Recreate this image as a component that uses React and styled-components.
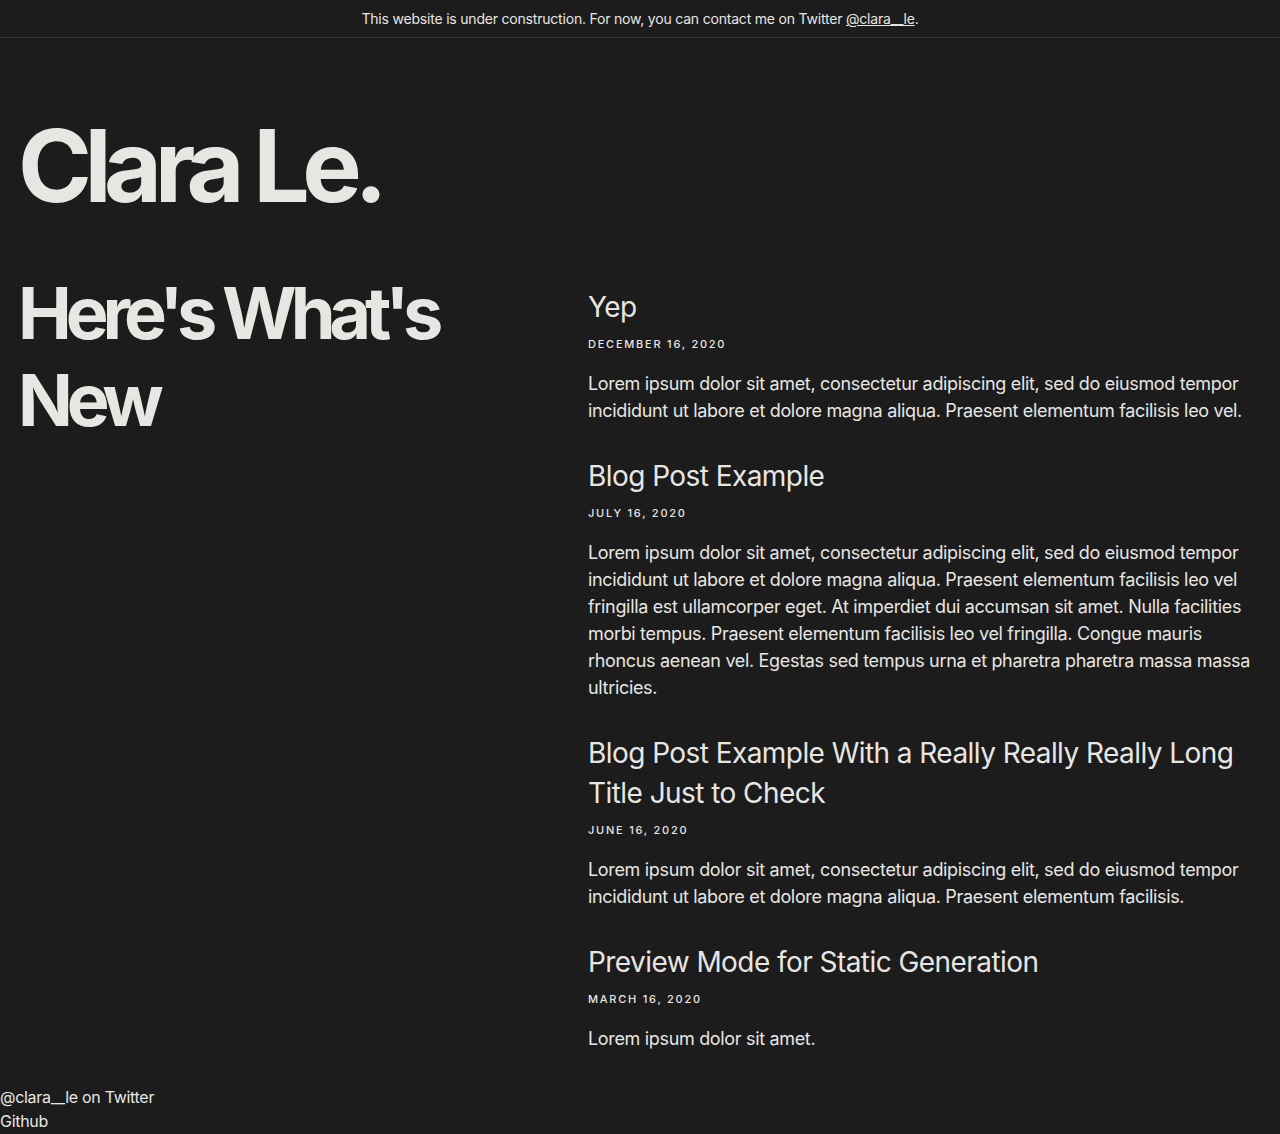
import React from 'react';
import styled, { createGlobalStyle } from 'styled-components';

const GlobalStyle = createGlobalStyle`
  html, body {
    margin: 0;
    padding: 0;
    background: #1b1c1b;
    color: #e8e6e3;
    font-family: Inter, "Noto Sans", sans-serif;
  }
  * { box-sizing: border-box; }
`;

const Banner = styled.div`
  height: 38px;
  border-bottom: 1px solid #363836;
  display: flex;
  align-items: center;
  justify-content: center;
  font-size: 14px;
  letter-spacing: -0.2px;
  color: #e8e6e3;
`;

const BannerLink = styled.a`
  color: inherit;
  text-decoration: underline;
`;

const Main = styled.main`
  padding: 0 20px;
`;

const SiteTitle = styled.h1`
  margin: 0 0 0 -2px;
  padding-top: 68px;
  font-size: 100px;
  line-height: 120px;
  font-weight: 700;
  letter-spacing: -0.075em;
`;

const Columns = styled.div`
  display: grid;
  grid-template-columns: 538px 1fr;
  column-gap: 30px;
  margin-top: 43px;
`;

const SectionTitle = styled.h2`
  margin: 0 0 0 -2px;
  font-size: 72px;
  line-height: 87px;
  font-weight: 700;
  letter-spacing: -0.085em;
`;

const PostList = styled.div`
  display: flex;
  flex-direction: column;
  gap: 32px;
  padding-top: 18px;
`;

const Post = styled.article``;

const PostTitle = styled.h3`
  margin: 0;
  font-size: 28px;
  line-height: 40px;
  font-weight: 400;
  letter-spacing: -0.02em;
`;

const PostDate = styled.div`
  margin-top: 9px;
  font-size: 11px;
  line-height: 16px;
  font-weight: 500;
  letter-spacing: 0.16em;
  text-transform: uppercase;
`;

const PostBody = styled.p`
  margin: 18px 0 0;
  font-size: 18px;
  line-height: 27px;
  letter-spacing: -0.33px;
`;

const Footer = styled.footer`
  margin-top: 33px;
  font-size: 16px;
  line-height: 24px;
  letter-spacing: -0.3px;
`;

const posts = [
  {
    title: 'Yep',
    date: 'December 16, 2020',
    body: 'Lorem ipsum dolor sit amet, consectetur adipiscing elit, sed do eiusmod tempor incididunt ut labore et dolore magna aliqua. Praesent elementum facilisis leo vel.',
  },
  {
    title: 'Blog Post Example',
    date: 'July 16, 2020',
    body: 'Lorem ipsum dolor sit amet, consectetur adipiscing elit, sed do eiusmod tempor incididunt ut labore et dolore magna aliqua. Praesent elementum facilisis leo vel fringilla est ullamcorper eget. At imperdiet dui accumsan sit amet. Nulla facilities morbi tempus. Praesent elementum facilisis leo vel fringilla. Congue mauris rhoncus aenean vel. Egestas sed tempus urna et pharetra pharetra massa massa ultricies.',
  },
  {
    title: 'Blog Post Example With a Really Really Really Long Title Just to Check',
    date: 'June 16, 2020',
    body: 'Lorem ipsum dolor sit amet, consectetur adipiscing elit, sed do eiusmod tempor incididunt ut labore et dolore magna aliqua. Praesent elementum facilisis.',
  },
  {
    title: 'Preview Mode for Static Generation',
    date: 'March 16, 2020',
    body: 'Lorem ipsum dolor sit amet.',
  },
];

export default function App() {
  return (
    <>
      <GlobalStyle />
      <Banner>
        <span>
          This website is under construction. For now, you can contact me on Twitter{' '}
          <BannerLink href="#">@clara__le</BannerLink>.
        </span>
      </Banner>
      <Main>
        <SiteTitle>Clara Le.</SiteTitle>
        <Columns>
          <SectionTitle>Here's What's New</SectionTitle>
          <PostList>
            {posts.map((p) => (
              <Post key={p.title}>
                <PostTitle>{p.title}</PostTitle>
                <PostDate>{p.date}</PostDate>
                <PostBody>{p.body}</PostBody>
              </Post>
            ))}
          </PostList>
        </Columns>
      </Main>
      <Footer>
        <div>@clara__le on Twitter</div>
        <div>Github</div>
      </Footer>
    </>
  );
}
